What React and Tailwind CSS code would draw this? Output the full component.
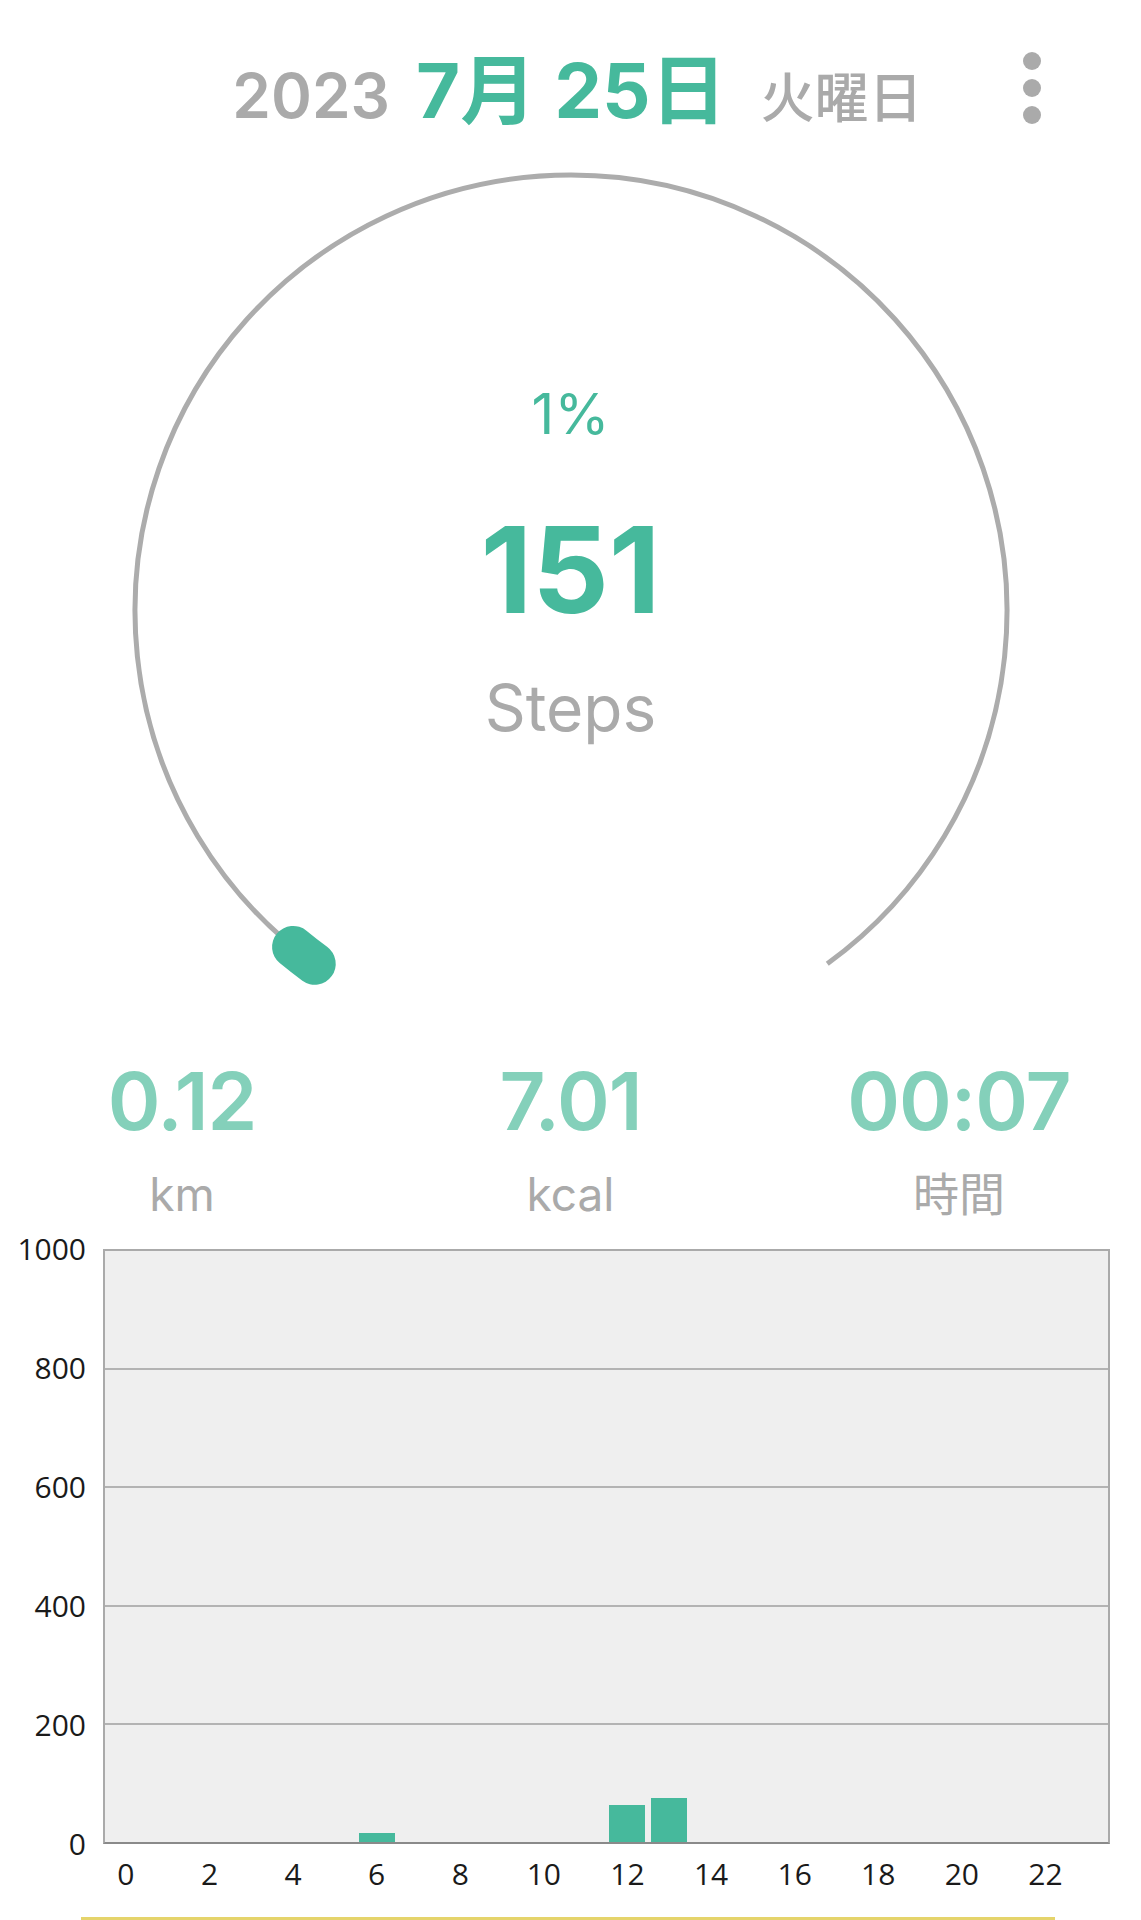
import React from 'react';

const TEAL = '#46b99c';

const hourly = [0, 0, 0, 0, 0, 0, 15, 0, 0, 0, 0, 0, 62, 74, 0, 0, 0, 0, 0, 0, 0, 0, 0, 0];
const yTicks = ['1000', '800', '600', '400', '200', '0'];

// point on the ring, angle in degrees (0 = right, clockwise)
const pt = (a, r = 436, c = 440) => {
  const rad = (a * Math.PI) / 180;
  return [c + r * Math.cos(rad), c + r * Math.sin(rad)];
};

const Ring = () => {
  const [sx, sy] = pt(126);
  const [ex, ey] = pt(54);
  const [gx1, gy1] = pt(126);
  const [gx2, gy2] = pt(129.6);
  return (
    <svg className="absolute inset-0 overflow-visible" width="880" height="880" viewBox="0 0 880 880" fill="none">
      <path d={`M ${sx} ${sy} A 436 436 0 1 1 ${ex} ${ey}`} stroke="#acacac" strokeWidth="5" />
      <path d={`M ${gx1} ${gy1} A 436 436 0 0 1 ${gx2} ${gy2}`} stroke={TEAL} strokeWidth="42" strokeLinecap="round" />
    </svg>
  );
};

const Stat = ({ value, label }) => (
  <div className="w-[240px] flex flex-col items-center">
    <div className="text-[80px] leading-none font-semibold text-[#84d0ba] tracking-[-1px]">{value}</div>
    <div className="mt-[30px] text-[46px] leading-none text-[#aaaaaa]">{label}</div>
  </div>
);

export default function App() {
  return (
    <div className="w-full h-[1920px] overflow-hidden bg-white font-['Inter','Noto_Sans_CJK_JP',sans-serif]">
      {/* Date header */}
      <div className="h-[171px] grid grid-cols-[1fr_auto_1fr] pt-[52px]">
        <div />
        <div className="flex items-baseline leading-none pl-[14px]">
          <span className="text-[62px] font-semibold text-[#aaaaaa]">2023</span>
          <span className="ml-[26px] text-[76px] font-bold" style={{ color: TEAL }}>7月</span>
          <span className="ml-[18px] text-[76px] font-bold" style={{ color: TEAL }}>25日</span>
          <span className="ml-[34px] text-[54px] font-medium text-[#aaaaaa]">火曜日</span>
        </div>
        <div className="flex justify-end pr-[100px]">
          <button className="flex flex-col gap-[9px] pt-0">
            <span className="w-[18px] h-[18px] rounded-full bg-[#aaaaaa]" />
            <span className="w-[18px] h-[18px] rounded-full bg-[#aaaaaa]" />
            <span className="w-[18px] h-[18px] rounded-full bg-[#aaaaaa]" />
          </button>
        </div>
      </div>

      {/* Step ring */}
      <div className="relative w-[880px] h-[880px] mx-auto">
        <Ring />
        <div className="relative flex flex-col items-center pt-[215px]">
          <div className="text-[56px] leading-none" style={{ color: TEAL }}>1%</div>
          <div className="mt-[68px] text-[120px] leading-none font-bold" style={{ color: TEAL }}>151</div>
          <div className="mt-[46px] text-[64px] leading-none text-[#aaaaaa]">Steps</div>
        </div>
      </div>

      {/* Stats */}
      <div className="flex justify-between px-[62px] mt-[10px]">
        <Stat value="0.12" label="km" />
        <Stat value="7.01" label="kcal" />
        <Stat value="00:07" label="時間" />
      </div>

      {/* Hourly chart */}
      <div className="flex mt-[32px] font-['Open_Sans',sans-serif] text-[30px] text-[#1a1a1a]">
        <div className="w-[103px] h-[625px] -my-[15px] pr-[17px] flex flex-col justify-between items-end">
          {yTicks.map((t) => (
            <span key={t} className="h-[30px] leading-[30px]">{t}</span>
          ))}
        </div>
        <div className="relative w-[1007px] h-[595px] border-2 border-[#aaaaaa] border-b-[#8a8a8a] bg-[#efefef] flex flex-col">
          {[0, 1, 2, 3].map((i) => (
            <div key={i} className="flex-1 border-b-2 border-[#b3b3b3]" />
          ))}
          <div className="flex-1" />
          <div className="absolute inset-0 flex items-end">
            {hourly.map((v, i) => (
              <div key={i} className="flex-1 flex justify-center items-end h-full">
                {v > 0 && <div className="w-[86%]" style={{ height: `${(v / 1000) * 591}px`, background: TEAL }} />}
              </div>
            ))}
          </div>
        </div>
      </div>
      <div className="flex ml-[105px] w-[1003px] mt-[15px] font-['Open_Sans',sans-serif] text-[30px] text-[#1a1a1a]">
        {hourly.map((_, i) => (
          <div key={i} className="flex-1 flex justify-center h-[30px] leading-[30px] whitespace-nowrap">
            {i % 2 === 0 ? <span>{i}</span> : null}
          </div>
        ))}
      </div>

      {/* bottom banner edge */}
      <div className="ml-[81px] w-[974px] mt-[28px] h-[3px] bg-[#e5d46b]" />
    </div>
  );
}
